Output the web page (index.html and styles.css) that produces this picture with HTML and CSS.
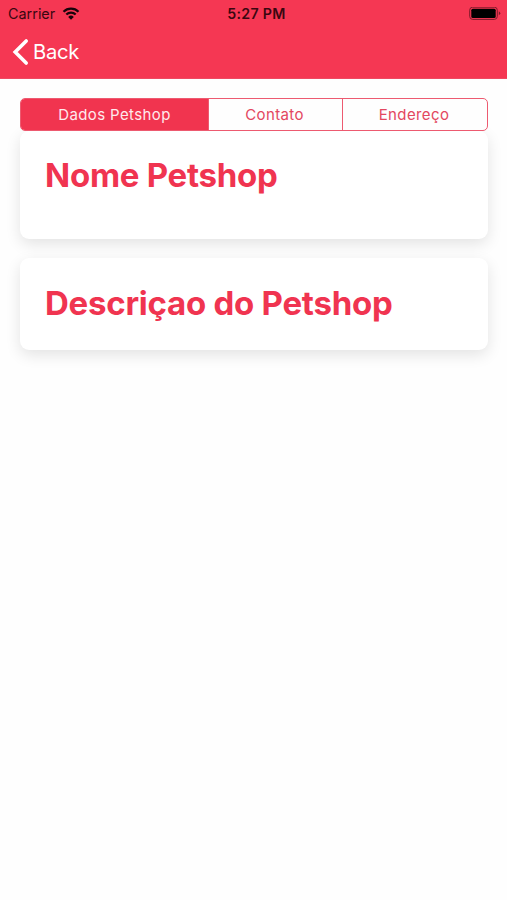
FILE: index.html
```html
<!DOCTYPE html>
<html lang="pt-BR">
<head>
<meta charset="utf-8">
<title>Petshop</title>
<link rel="stylesheet" href="styles.css">
</head>
<body>
<header class="header">
  <div class="status">
    <div class="carrier"><span>Carrier</span>
      <svg class="wifi" width="18" height="13" viewBox="0 0 17 13" fill="none" stroke="currentColor" stroke-width="2.2">
        <path d="M1 4.8a10.6 10.6 0 0 1 15 0M3.8 7.6a6.6 6.6 0 0 1 9.4 0"/>
        <path d="M5.7 9.9a4 4 0 0 1 5.6 0L8.5 12.7z" fill="currentColor" stroke="none"/>
      </svg>
    </div>
    <time class="clock">5:27 PM</time>
    <svg class="battery" width="32" height="14" viewBox="0 0 32 14">
      <rect x=".7" y=".2" width="27.6" height="12.2" rx="3" fill="none" stroke="#7c1a29" stroke-width="1"/>
      <rect x="2.3" y="1.7" width="24.4" height="9.2" rx="1.5"/>
      <path d="M29.8 4.3q3 2 0 4z" fill="#7c1a29"/>
    </svg>
  </div>
  <nav class="nav">
    <svg width="17" height="28" viewBox="0 0 17 28" fill="none" stroke="#fff" stroke-width="3.6" stroke-linecap="round"><path d="M14.2 3 3.2 14l11 11"/></svg>
    <span class="back">Back</span>
  </nav>
</header>
<main class="content">
  <div class="tabs">
    <div class="tab active"><span>Dados Petshop</span></div>
    <div class="tab"><span>Contato</span></div>
    <div class="tab"><span>Endereço</span></div>
  </div>
  <section class="card name"><h1>Nome Petshop</h1></section>
  <section class="card description"><h1>Descriçao do Petshop</h1></section>
</main>
</body>
</html>
```
FILE: styles.css
```css
* { box-sizing: border-box; }
body {
  margin: 0;
  min-height: 900px;
  background: #fefefe;
  font-family: Inter, "Liberation Sans", sans-serif;
}
.header { height: 79px; background: #f53753; border-bottom: 1px solid #ee4a62; }
.status {
  display: grid;
  grid-template-columns: 1fr auto 1fr;
  align-items: center;
  height: 27px;
  padding: 0 6px 0 8px;
  color: #3a0710;
}
.carrier { display: flex; align-items: center; gap: 7px; font-size: 14.4px; }
.wifi { color: #17030a; }
.clock { padding-left: 4px; font-size: 14.2px; font-weight: 600; letter-spacing: .3px; }
.battery { justify-self: end; }
.nav { display: flex; align-items: center; gap: 4px; height: 50px; padding-left: 12px; color: #fff; }
.back { margin-top: -1px; font-size: 20.2px; letter-spacing: -.3px; }
.content { padding: 19px 19px 0 20px; }
.tabs {
  position: relative;
  z-index: 1;
  display: grid;
  grid-template-columns: 187px 134px 1fr;
  height: 33px;
  overflow: hidden;
  border: 1.5px solid #ed5a70;
  border-radius: 5px;
  background: #fefefe;
}
.tab { display: flex; align-items: center; justify-content: center; padding: 0 2px 1px 0; color: #e34760; font-size: 15px; letter-spacing: .38px; }
.tab + .tab { border-left: 1px solid #ed5a70; }
.tab.active { padding-right: 0; background: #f1344f; color: #ffe9ec; }
.card {
  padding-left: 25px;
  border-radius: 9px;
  background: #fff;
  box-shadow: 0 5px 15px rgba(0, 0, 0, .11);
}
.name { height: 108px; padding-top: 23px; }
.description { position: relative; height: 92px; margin-top: 19px; padding-top: 24px; }
h1 { margin: 0; color: #f03450; font-size: 33px; line-height: 42px; font-weight: 700; letter-spacing: -.25px; white-space: nowrap; }
```
